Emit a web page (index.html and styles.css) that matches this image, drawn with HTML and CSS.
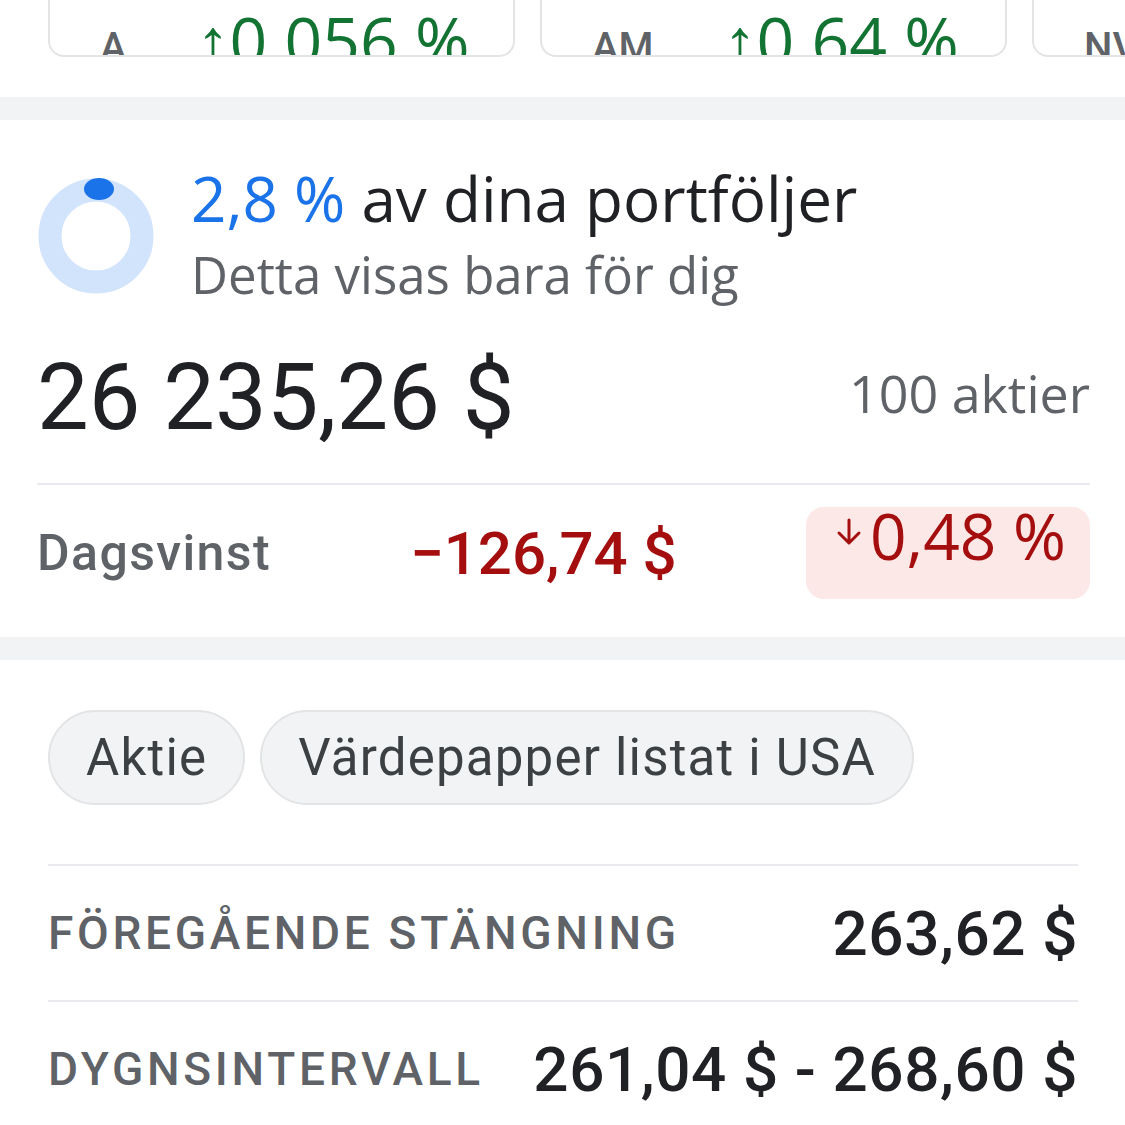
FILE: index.html
```html
<!DOCTYPE html>
<html lang="sv">
<head>
    <meta charset="UTF-8">
    <meta name="viewport" content="width=device-width, initial-scale=1.0">
    <title>Aktie - portfölj</title>
    <link rel="stylesheet" href="styles.css">
</head>
<body>
  <div class="ticker-row">
    <div class="ticker-card">
      <span class="ticker-name">A</span>
      <span class="ticker-change up">↑0.056 %</span>
    </div>
    <div class="ticker-card">
      <span class="ticker-name">AM</span>
      <span class="ticker-change up">↑0.64 %</span>
    </div>
    <div class="ticker-card">
      <span class="ticker-name">NV</span>
    </div>
  </div>

  <div class="band"></div>

  <section class="holding">
    <div class="holding-head">
      <svg class="donut" width="120" height="120" viewBox="0 0 120 120">
        <circle cx="59" cy="60" r="46" fill="none" stroke="#d2e3fc" stroke-width="23"/>
        <ellipse cx="62" cy="13" rx="15" ry="11" fill="#1a73e8"/>
      </svg>
      <div class="holding-title">
        <h1><span class="accent">2,8 %</span> av dina portföljer</h1>
        <p>Detta visas bara för dig</p>
      </div>
    </div>

    <div class="holding-value">
      <span class="total">26 235,26 $</span>
      <span class="shares">100 aktier</span>
    </div>

    <div class="holding-day">
      <span class="day-label">Dagsvinst</span>
      <span class="day-amount">−126,74 $</span>
      <span class="day-pill">
        <svg class="arrow" width="26" height="28" viewBox="0 0 26 28">
          <path d="M13 2 V25 M3 15 L13 25 L23 15" fill="none" stroke="#a50e0e" stroke-width="3" stroke-linecap="round" stroke-linejoin="round"/>
        </svg>0,48 %
      </span>
    </div>
  </section>

  <div class="band band-low"></div>

  <section class="details">
    <div class="chips">
      <span class="chip">Aktie</span>
      <span class="chip">Värdepapper listat i USA</span>
    </div>

    <div class="stat-row">
      <span class="stat-label">FÖREGÅENDE STÄNGNING</span>
      <span class="stat-value">263,62 $</span>
    </div>
    <div class="stat-row">
      <span class="stat-label">DYGNSINTERVALL</span>
      <span class="stat-value">261,04 $ - 268,60 $</span>
    </div>
  </section>
</body>
</html>
```

FILE: styles.css
```css
* {
    margin: 0;
    padding: 0;
    box-sizing: border-box;
}

body {
    font-family: 'Roboto', 'Liberation Sans', sans-serif;
    background: white;
    color: #202124;
    width: 1125px;
    overflow: hidden;
}

/* Ticker strip (scrolled, only the bottom of the cards shows) */
.ticker-row {
    display: flex;
    gap: 25px;
    padding-left: 48px;
    height: 57px;
    overflow: hidden;
}

.ticker-card {
    flex: 0 0 467px;
    height: 57px;
    border: 2px solid #e3e4e6;
    border-top: none;
    border-radius: 0 0 16px 16px;
    display: flex;
    align-items: flex-start;
    padding: 0 0 0 50px;
    overflow: hidden;
}

.ticker-name {
    font-size: 40px;
    color: #5f6368;
    margin-top: 24px;
    margin-right: 70px;
    font-weight: 500;
}

.ticker-change {
    font-family: 'Open Sans', 'Roboto', sans-serif;
    font-size: 66px;
    line-height: 1.2;
}

.up {
    color: #137333;
}

.band {
    height: 23px;
    background: #f1f3f4;
    margin-top: 40px;
}

.band-low {
    margin-top: 38px;
}

.holding {
    padding: 38px 35px 0 37px;
}

.holding-head {
    display: flex;
    align-items: flex-start;
    gap: 34px;
}

.donut {
    flex-shrink: 0;
    margin-top: 18px;
}

.holding-title h1 {
    font-family: 'Open Sans', 'Roboto', sans-serif;
    font-size: 62px;
    font-weight: 400;
    line-height: 1.3;
    color: #202124;
}

.accent {
    color: #1a73e8;
}

.holding-title p {
    font-family: 'Open Sans', 'Roboto', sans-serif;
    font-size: 51px;
    color: #5f6368;
    line-height: 1.3;
    margin-top: 2px;
}

.holding-value {
    display: flex;
    justify-content: space-between;
    align-items: center;
    padding: 36px 0 30px;
    border-bottom: 2px solid #e8eaed;
}

.total {
    font-size: 92px;
    line-height: 1.2;
}

.shares {
    font-family: 'Open Sans', 'Roboto', sans-serif;
    font-size: 52px;
    color: #5f6368;
    margin-top: -12px;
}

.holding-day {
    display: flex;
    align-items: center;
    padding-top: 22px;
}

.day-label {
    font-size: 50px;
    font-weight: 500;
    letter-spacing: 1.4px;
    color: #5f6368;
    width: 373px;
}

.day-amount {
    font-size: 60px;
    font-weight: 500;
    color: #a50e0e;
    flex: 1;
}

.day-pill {
    font-family: 'Open Sans', 'Roboto', sans-serif;
    background: #fce8e6;
    color: #a50e0e;
    font-size: 64px;
    border-radius: 18px;
    width: 284px;
    height: 92px;
    padding: 0 0 0 30px;
    line-height: 58px;
}

.day-pill .arrow {
    vertical-align: 14px;
    margin-right: 8px;
}

.details {
    padding: 50px 47px 0 48px;
}

.chips {
    display: flex;
    gap: 15px;
    margin-bottom: 59px;
}

.chip {
    display: inline-block;
    height: 95px;
    line-height: 91px;
    padding: 0 36px;
    border-radius: 48px;
    background: #f1f3f4;
    border: 2px solid #e3e4e6;
    font-size: 51px;
    letter-spacing: 1.2px;
    color: #3c4043;
}

.stat-row {
    display: flex;
    justify-content: space-between;
    align-items: center;
    height: 136px;
    border-top: 2px solid #e8eaed;
}

.stat-label {
    font-size: 46px;
    font-weight: 500;
    letter-spacing: 3.7px;
    color: #5f6368;
}

.stat-value {
    font-size: 62px;
    font-weight: 500;
    letter-spacing: 0.6px;
    color: #202124;
}
```
